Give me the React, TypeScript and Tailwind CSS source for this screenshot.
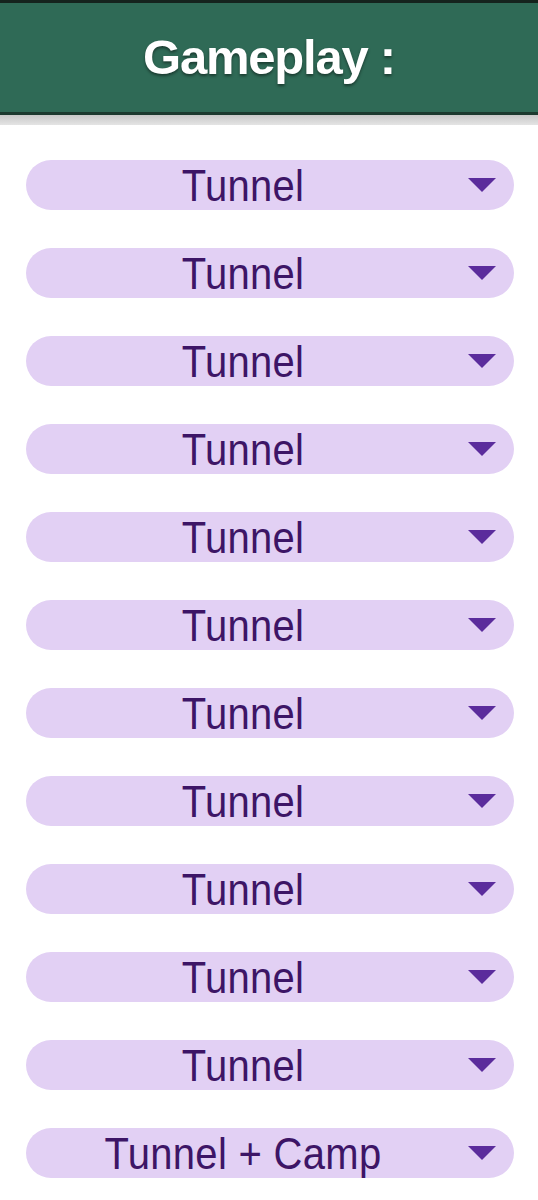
import React from "react";

const options = [
  "Tunnel",
  "Tunnel",
  "Tunnel",
  "Tunnel",
  "Tunnel",
  "Tunnel",
  "Tunnel",
  "Tunnel",
  "Tunnel",
  "Tunnel",
  "Tunnel",
  "Tunnel + Camp",
];

function Caret() {
  return (
    <svg width="28" height="14" viewBox="0 0 28 14" className="shrink-0">
      <path d="M0 0 L28 0 L14 14 Z" fill="#5b2c9c" />
    </svg>
  );
}

export default function App() {
  return (
    <div className="min-h-screen bg-white font-['Liberation_Sans',Arial,sans-serif] flex flex-col">
      {/* Header */}
      <header className="w-full">
        <div className="h-[3px] bg-[#15231d]" />
        <div className="h-[109px] bg-[#2f6a56] flex items-center justify-center">
          <h1 className="text-white font-bold text-[49px] leading-none tracking-tight [text-shadow:0_2px_3px_rgba(0,0,0,0.45)]">
            Gameplay :
          </h1>
        </div>
        <div className="h-[3px] bg-[#1c3a2f]" />
        <div className="h-[10px] bg-gradient-to-b from-[#c8c8c8] to-[#e4e4e4]" />
      </header>

      {/* Selects */}
      <main className="flex flex-col gap-[38px] pl-[26px] pr-[24px] pt-[35px] pb-[20px]">
        {options.map((opt, i) => (
          <div
            key={i}
            className="h-[50px] rounded-full bg-[#e2d0f4] flex items-center gap-[8px] pr-[18px]"
          >
            <span className="flex-1 text-center text-[40px] leading-none text-[#3d1566] scale-y-[1.12] tracking-[0.3px]">
              {opt}
            </span>
            <Caret />
          </div>
        ))}
      </main>
    </div>
  );
}
